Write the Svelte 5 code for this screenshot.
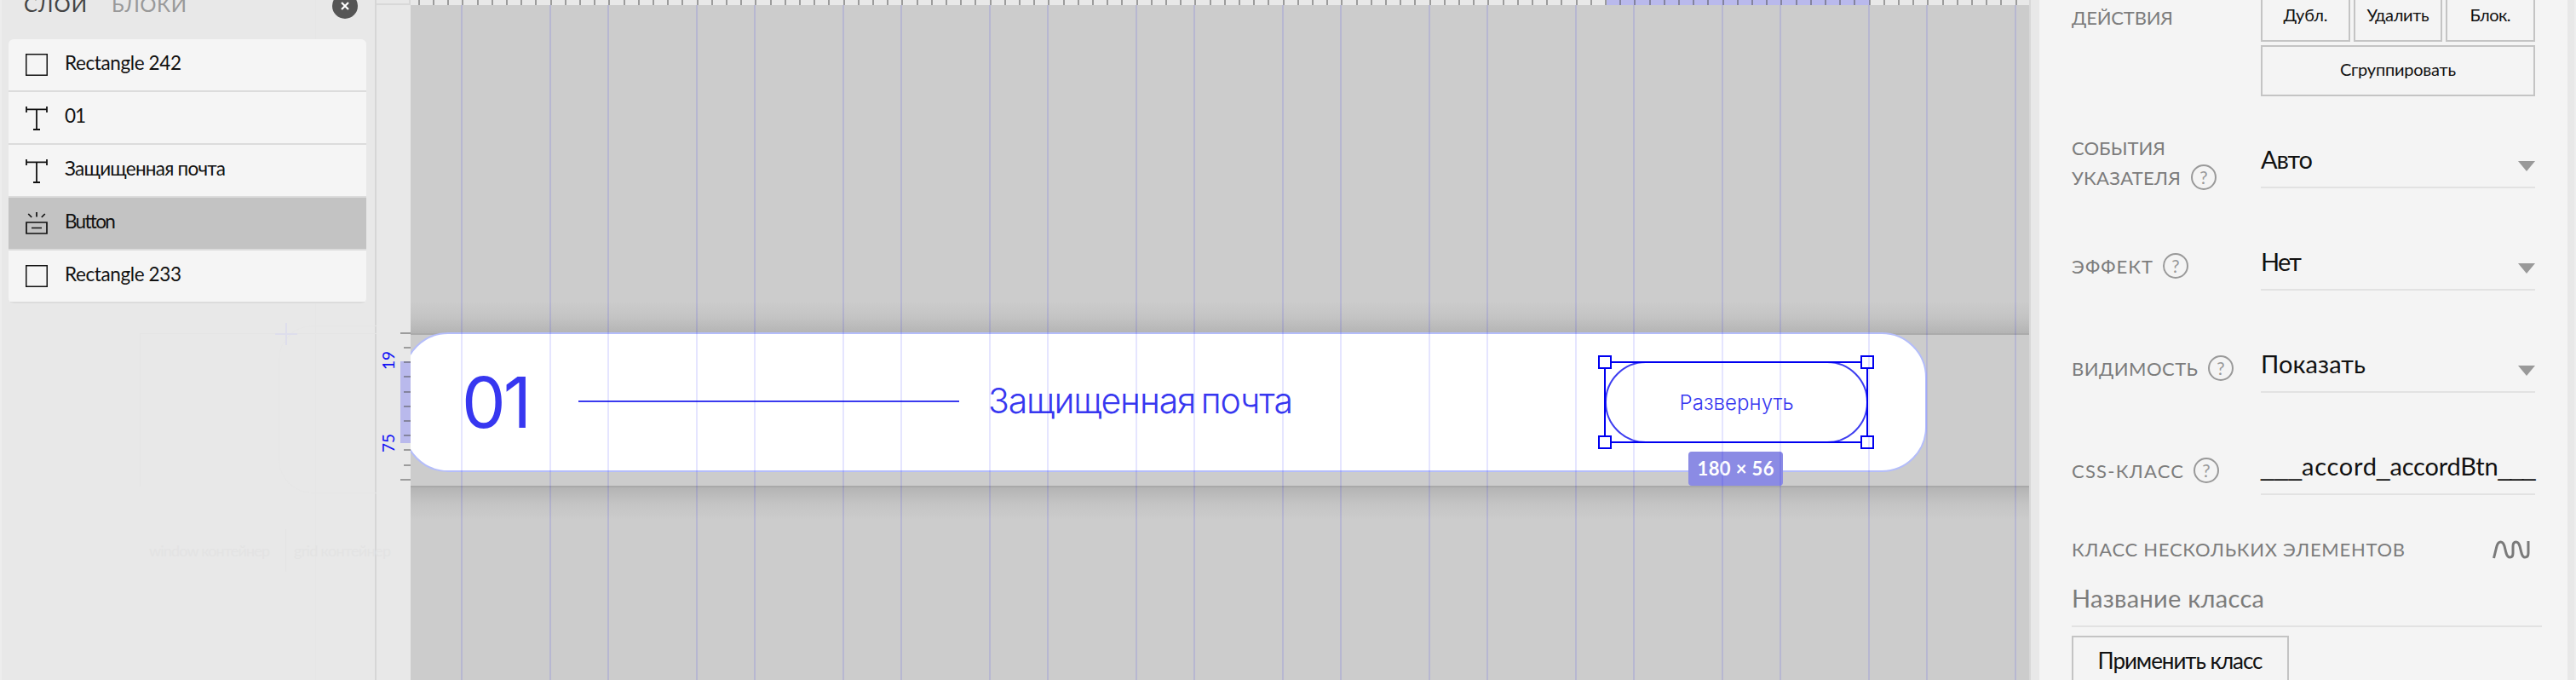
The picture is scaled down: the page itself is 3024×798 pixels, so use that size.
<script>
  const layers = [
    { icon: 'rect', name: 'Rectangle 242', w: 137 },
    { icon: 'text', name: '01', w: 25 },
    { icon: 'text', name: 'Защищенная почта', w: 189 },
    { icon: 'button', name: 'Button', w: 59, active: true },
    { icon: 'rect', name: 'Rectangle 233', w: 137 },
  ];

  const fields = [
    { lines: [['СОБЫТИЯ', 110], ['УКАЗАТЕЛЯ', 128]], value: 'Авто', w: 61, select: true },
    { lines: [['ЭФФЕКТ', 95]], value: 'Нет', w: 48, select: true },
    { lines: [['ВИДИМОСТЬ', 148]], value: 'Показать', w: 123, select: true },
    { lines: [['CSS-КЛАСС', 131]], parts: [['___', 48], ['accord', 88], ['_', 0], ['accordBtn', 127], ['___', 44]], select: false },
  ];

  const guides = [];
  for (let x = 541; x < 2380; x += 172) {
    guides.push(x - 482);
    if (x > 541) guides.push(x - 68 - 482);
  }
  guides.push(2365 - 482);
  const unique = [...new Set(guides)];

  const topTicks = Array.from({ length: 110 }, (_, i) => 8.8 + i * 17.2);
  const sideTicks = Array.from({ length: 11 }, (_, i) => ({ y: 389.8 + i * 17.2, major: i % 10 === 0 }));

  // Spreads letters so that a label takes the given width.
  function fit(node, width) {
    const gaps = node.textContent.length - 1;
    if (!width || gaps < 1) return;
    const natural = node.getBoundingClientRect().width;
    const spacing = (width - natural) / gaps;
    node.style.letterSpacing = `${spacing}px`;
    node.style.marginRight = `${-spacing}px`;
  }
</script>

<div class="app">
  <aside class="layers">
    <header>
      <span class="tab on" use:fit={74}>СЛОИ</span>
      <span class="tab" use:fit={88}>БЛОКИ</span>
      <span class="close">
        <svg width="10" height="10" viewBox="0 0 10 10"><path d="M1 1l8 8M9 1l-8 8" stroke="#fff" stroke-width="2.2" fill="none" /></svg>
      </span>
    </header>
    <ul>
      {#each layers as l}
        <li class:active={l.active}>
          <svg width="26" height="30" viewBox="0 0 26 30" fill="none" stroke="#111">
            {#if l.icon === 'rect'}
              <rect x="0.75" y="2.75" width="24.5" height="24.5" stroke-width="1.5" />
            {:else if l.icon === 'text'}
              <path d="M1 2v7M25 2v7M1 5.3h24M13 5.3v23M9 29h8" stroke-width="1.8" />
            {:else}
              <path d="M1 14h24v13H1zM7 20.5h12M13 2v5.5M3.2 4l4 4M22.8 4l-4 4" stroke-width="1.7" />
            {/if}
          </svg>
          <span use:fit={l.w}>{l.name}</span>
        </li>
      {/each}
    </ul>
    <div class="ghost-box"></div>
    <div class="ghost-card"></div>
    <div class="ghost-v"></div>
    <svg class="plus" width="26" height="26"><path d="M13 0v26M0 13h26" stroke="#dedeec" stroke-width="2" /></svg>
    <div class="ghost-text">
      <span use:fit={142}>window контейнер</span>
      <i></i>
      <span use:fit={114}>grid контейнер</span>
    </div>
  </aside>

  <div class="ruler">
    <div class="corner"></div>
    <div class="mark"></div>
    {#each sideTicks as t}
      <b class:major={t.major} style="top:{t.y}px"></b>
    {/each}
    <span class="num n1">19</span>
    <span class="num n2">75</span>
  </div>

  <main>
    <div class="top-ruler">
      <div class="top-mark"></div>
      {#each topTicks as x}<b style="left:{x}px"></b>{/each}
    </div>
    <div class="shade up"></div>
    <div class="shade down"></div>
    <div class="card"></div>
    <span class="index"><span use:fit={82}>01</span></span>
    <div class="rule"></div>
    <span class="title"><span use:fit={358}>Защищенная почта</span></span>
    <div class="pill"><span use:fit={134}>Развернуть</span></div>
    <div class="select">
      <i class="tl"></i><i class="tr"></i><i class="bl"></i><i class="br"></i>
    </div>
    <div class="badge"><span use:fit={90}>180 × 56</span></div>
    {#each unique as x}<div class="guide" style="left:{x}px"></div>{/each}
  </main>

  <aside class="props">
    <section class="actions">
      <div class="label"><span use:fit={119}>ДЕЙСТВИЯ</span></div>
      <div class="buttons">
        <button><span use:fit={52}>Дубл.</span></button>
        <button><span use:fit={73}>Удалить</span></button>
        <button><span use:fit={48}>Блок.</span></button>
        <button class="wide"><span use:fit={136}>Сгруппировать</span></button>
      </div>
    </section>

    {#each fields as f}
      <section class="field" class:double={f.lines.length > 1}>
        <div class="label">
          {#each f.lines as line, i}
            <div class="line">
              <span use:fit={line[1]}>{line[0]}</span>
              {#if i === f.lines.length - 1}<em>?</em>{/if}
            </div>
          {/each}
        </div>
        <div class="control">
          {#if f.parts}
            <div class="parts">
              {#each f.parts as p}<span class:bar={p[0].startsWith('_')} use:fit={p[1]}>{p[0]}</span>{/each}
            </div>
          {:else}
            <span use:fit={f.w}>{f.value}</span>
          {/if}
          {#if f.select}
            <svg width="20" height="12" viewBox="0 0 20 12"><path d="M0 0h20L10 12z" fill="#999" /></svg>
          {/if}
        </div>
      </section>
    {/each}

    <div class="multi">
      <span use:fit={391}>КЛАСС НЕСКОЛЬКИХ ЭЛЕМЕНТОВ</span>
      <svg width="44" height="22" viewBox="0 0 44 22" fill="none" stroke="#7a7a7a" stroke-width="3">
        <path d="M1.5 21L5 7C6 3.500 7 2 9.500 2C12 2 13 3.500 14 7L16 15C17 18.500 18 20 20.500 20C23 20 24 18.500 24 15V7C24 3.500 25 2 27.500 2C30 2 31 3.500 32 7L34 15C35 18.500 36 20 38 20C41 20 42 18.500 42 15V1" />
      </svg>
    </div>
    <div class="input"><span use:fit={226}>Название класса</span></div>
    <button class="apply"><span use:fit={194}>Применить класс</span></button>
  </aside>
  <div class="edge"></div>
</div>

<style>
  :global(body) { margin: 0; overflow: hidden; }
  .app {
    display: flex;
    width: 3024px;
    height: 798px;
    overflow: hidden;
    background: #e8e8e8;
    font-family: Lato, "Noto Sans", sans-serif;
    color: #111;
  }
  .app * { box-sizing: border-box; }
  span { display: inline-block; white-space: pre; }

  .layers {
    position: relative;
    width: 442px;
    flex: none;
    border-left: 2px solid #ededed;
    border-right: 2px solid #d6d6d6;
  }
  header { display: flex; align-items: flex-start; height: 46px; padding-left: 26px; }
  .tab { font-size: 24px; line-height: 30px; margin-top: -10px; color: #999; }
  .tab.on { color: #444; }
  .tab + .tab { margin-left: 29px; }
  .close {
    display: flex;
    align-items: center;
    justify-content: center;
    width: 30px;
    height: 30px;
    margin: -8px 20px 0 auto;
    border-radius: 50%;
    background: #555;
  }
  ul {
    width: 420px;
    margin: 0 0 0 8px;
    padding: 0;
    list-style: none;
    border-radius: 6px;
    overflow: hidden;
    position: relative;
    z-index: 1;
  }
  li {
    display: flex;
    align-items: center;
    gap: 20px;
    height: 62px;
    padding-left: 20px;
    background: #f5f5f5;
    border-bottom: 2px solid #dcdcdc;
    font-size: 22.5px;
  }
  li.active { background: #c3c3c3; }
  li span { line-height: 55px; height: 60px; }
  .ghost-box { position: absolute; left: 162px; top: 391px; width: 278px; height: 180px; border: 1px solid #e5e5e5; border-width: 1px 0 0 1px; }
  .ghost-card { position: absolute; left: 325px; top: 382px; width: 115px; height: 197px; border-radius: 40px 0 0 40px; border: 1px solid #e6e6e6; border-right: 0; }
  .ghost-v { position: absolute; left: 368px; top: 0; bottom: 0; width: 1px; background: #e6e6e6; }
  .plus { position: absolute; left: 321px; top: 379px; }
  .ghost-text { position: absolute; left: 173px; top: 620px; height: 52px; width: 290px; display: flex; align-items: center; color: #e3e3e3; font-size: 18px; line-height: 42px; }
  .ghost-text i { width: 1px; height: 50px; background: #e4e4e4; margin: 0 9px 0 18px; }

  .ruler { position: relative; width: 40px; flex: none; }
  .corner { height: 6px; border-bottom: 2px solid #d8d8d8; border-right: 2px solid #d8d8d8; }
  .ruler b { position: absolute; right: 0; width: 8px; height: 2px; background: rgba(80, 80, 80, .5); }
  .ruler b.major { width: 12px; }
  .mark { position: absolute; right: 0; top: 424px; width: 12px; height: 96px; background: #b9b9ec; }
  .num { position: absolute; left: 4px; width: 20px; height: 24px; font-size: 19px; line-height: 20px; writing-mode: vertical-rl; transform: rotate(180deg); color: #1212f5; text-align: center; }
  .n1 { top: 411px; }
  .n2 { top: 508px; }

  main { position: relative; width: 1902px; flex: none; overflow: hidden; background: #ccc; border-right: 2px solid #d8d8d8; }
  .top-ruler { position: relative; height: 6px; background: #e8e8e8; overflow: hidden; }
  .top-ruler b { position: absolute; top: 0; width: 2px; height: 6px; background: rgba(80, 80, 80, .5); }
  .top-mark { position: absolute; left: 1404px; top: 0; width: 309px; height: 6px; background: #b9b9ec; }
  .shade { position: absolute; left: 0; right: 0; height: 40px; }
  .up { top: 353px; background: linear-gradient(#ccc, #c4c4c4 50%, #b4b4b4); border-bottom: 2px solid #ababab; }
  .down { top: 570px; background: linear-gradient(#b4b4b4, #c4c4c4 50%, #ccc); border-top: 2px solid #a9a9a9; }
  .card { position: absolute; left: -9px; top: 390px; width: 1789px; height: 164px; border: 2px solid #b4bdfa; border-radius: 53px; background: #fff; }
  .index, .title, .pill { font-family: Inter, sans-serif; color: #3737f0; font-weight: 300; }
  .index { position: absolute; left: 60px; top: 423px; font-size: 82px; line-height: 100px; font-weight: 400; }
  .rule { position: absolute; left: 197px; top: 470px; width: 447px; height: 2px; background: #3a3aef; }
  .title { position: absolute; left: 678px; top: 445px; font-size: 41px; line-height: 50px; font-weight: 350; word-spacing: -4px; }
  .pill {
    position: absolute;
    left: 1402px;
    top: 424px;
    width: 309px;
    height: 96px;
    border: 2px solid #3d3df0;
    border-radius: 48px;
    font-size: 24px;
    line-height: 94px;
    text-align: center;
  }
  .select { position: absolute; left: 1401px; top: 424px; width: 310px; height: 96px; border: 2px solid #0000f0; }
  .select i { position: absolute; width: 16px; height: 16px; border: 2px solid #0000f0; background: #fff; }
  .tl { left: -9px; top: -9px; }
  .tr { right: -9px; top: -9px; }
  .bl { left: -9px; bottom: -9px; }
  .br { right: -9px; bottom: -9px; }
  .badge {
    position: absolute;
    left: 1500px;
    top: 530px;
    width: 111px;
    height: 40px;
    border-radius: 4px;
    background: #8b8be4;
    color: #fff;
    font-size: 22px;
    font-weight: 700;
    line-height: 39px;
    text-align: center;
  }
  .guide { position: absolute; top: 6px; bottom: 0; width: 2px; background: rgba(0, 0, 255, .1); }

  .props { width: 620px; flex: none; margin-left: 10px; padding-left: 38px; background: #f4f4f4; }
  .label { width: 222px; flex: none; font-size: 22px; line-height: 35px; color: #7c7c7c; }
  .actions { display: flex; height: 113px; }
  .actions .label { padding-top: 3px; }
  .buttons { display: grid; grid-template-columns: 105px 104px 105px; column-gap: 4px; row-gap: 4px; grid-auto-rows: 60px; margin-top: -11px; }
  button {
    padding: 0 0 5px;
    border: 2px solid #c4c4c4;
    background: transparent;
    font-family: inherit;
    color: #111;
    font-size: 20px;
  }
  .wide { grid-column: 1 / -1; }
  .field { display: flex; align-items: flex-end; width: 544px; height: 120px; }
  .field.double { height: 108px; }
  .field .label { padding-bottom: 11px; }
  .field.double .label { margin-bottom: -16px; padding-bottom: 11px; }
  .line { display: flex; height: 35px; align-items: flex-start; }
  em {
    width: 30px;
    height: 30px;
    margin: 2px 0 0 12px;
    border: 2px solid #999;
    border-radius: 50%;
    font-style: normal;
    font-size: 21px;
    line-height: 26px;
    text-align: center;
    color: #999;
  }
  .control {
    display: flex;
    justify-content: space-between;
    align-items: flex-start;
    width: 322px;
    height: 51px;
    border-bottom: 2px solid #e2e2e2;
    font-size: 29px;
    line-height: 34px;
  }
  .control svg { margin-top: 19px; flex: none; }
  .parts { display: flex; align-items: baseline; height: 40px; }
  .bar { font-family: "Liberation Sans", sans-serif; font-size: 28px; }
  .multi { display: flex; align-items: center; justify-content: space-between; width: 538px; height: 35px; margin-top: 46px; font-size: 22px; line-height: 35px; color: #7c7c7c; }
  .input { width: 552px; height: 74px; padding-top: 23px; border-bottom: 2px solid #e2e2e2; font-size: 29px; line-height: 34px; color: #7c7c7c; }
  .apply { display: block; width: 255px; height: 64px; margin-top: 10px; padding-bottom: 6px; font-size: 26px; }
  .edge { width: 10px; flex: none; background: #e8e8e8; border-right: 2px solid #eee; }
</style>
